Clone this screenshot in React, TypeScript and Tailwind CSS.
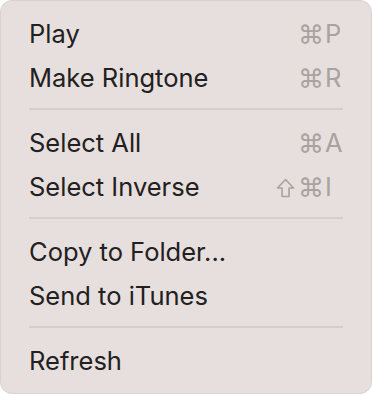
import React from "react";

type Item = { label: string; keys?: string[] };

const groups: Item[][] = [
  [
    { label: "Play", keys: ["⌘", "P"] },
    { label: "Make Ringtone", keys: ["⌘", "R"] },
  ],
  [
    { label: "Select All", keys: ["⌘", "A"] },
    { label: "Select Inverse", keys: ["⇧", "⌘", "I"] },
  ],
  [{ label: "Copy to Folder..." }, { label: "Send to iTunes" }],
  [{ label: "Refresh" }],
];

function Key({ k }: { k: string }) {
  if (k === "⇧") {
    return (
      <svg width="19" height="20" viewBox="0 0 19 20" className="mr-[3px]">
        <path
          d="M9.5 1.5 L17.5 10 H13 V18.5 H6 V10 H1.5 Z"
          fill="none"
          stroke="#a8a2a1"
          strokeWidth="1.6"
          strokeLinejoin="round"
        />
      </svg>
    );
  }
  if (k === "⌘") {
    return (
      <span className="text-[26px] leading-none mr-[1px]" style={{ fontFamily: '"DejaVu Sans", sans-serif' }}>
        {k}
      </span>
    );
  }
  return <span className="w-[18px] text-left">{k}</span>;
}

export default function App() {
  return (
    <div className="w-[372px] h-[394px] bg-white">
      <div
        className="w-full h-full rounded-[12px] bg-[#e6dfde] border border-[#d9d1d0] pt-[9px] px-[28px] flex flex-col text-[25.5px] text-[#222020]"
        style={{ fontFamily: 'Inter, "Noto Sans", sans-serif' }}
      >
        {groups.map((g, gi) => (
          <React.Fragment key={gi}>
            {gi > 0 && (
              <div className="h-[21px] flex items-center">
                <div className="h-[2px] w-full bg-[#d6cecd]" />
              </div>
            )}
            {g.map((it) => (
              <div key={it.label} className="h-[44px] pt-[5px] flex items-center justify-between">
                <span>{it.label}</span>
                {it.keys && (
                  <span className="flex items-center text-[#a8a2a1]">
                    {it.keys.map((k, i) => (
                      <Key key={i} k={k} />
                    ))}
                  </span>
                )}
              </div>
            ))}
          </React.Fragment>
        ))}
      </div>
    </div>
  );
}
